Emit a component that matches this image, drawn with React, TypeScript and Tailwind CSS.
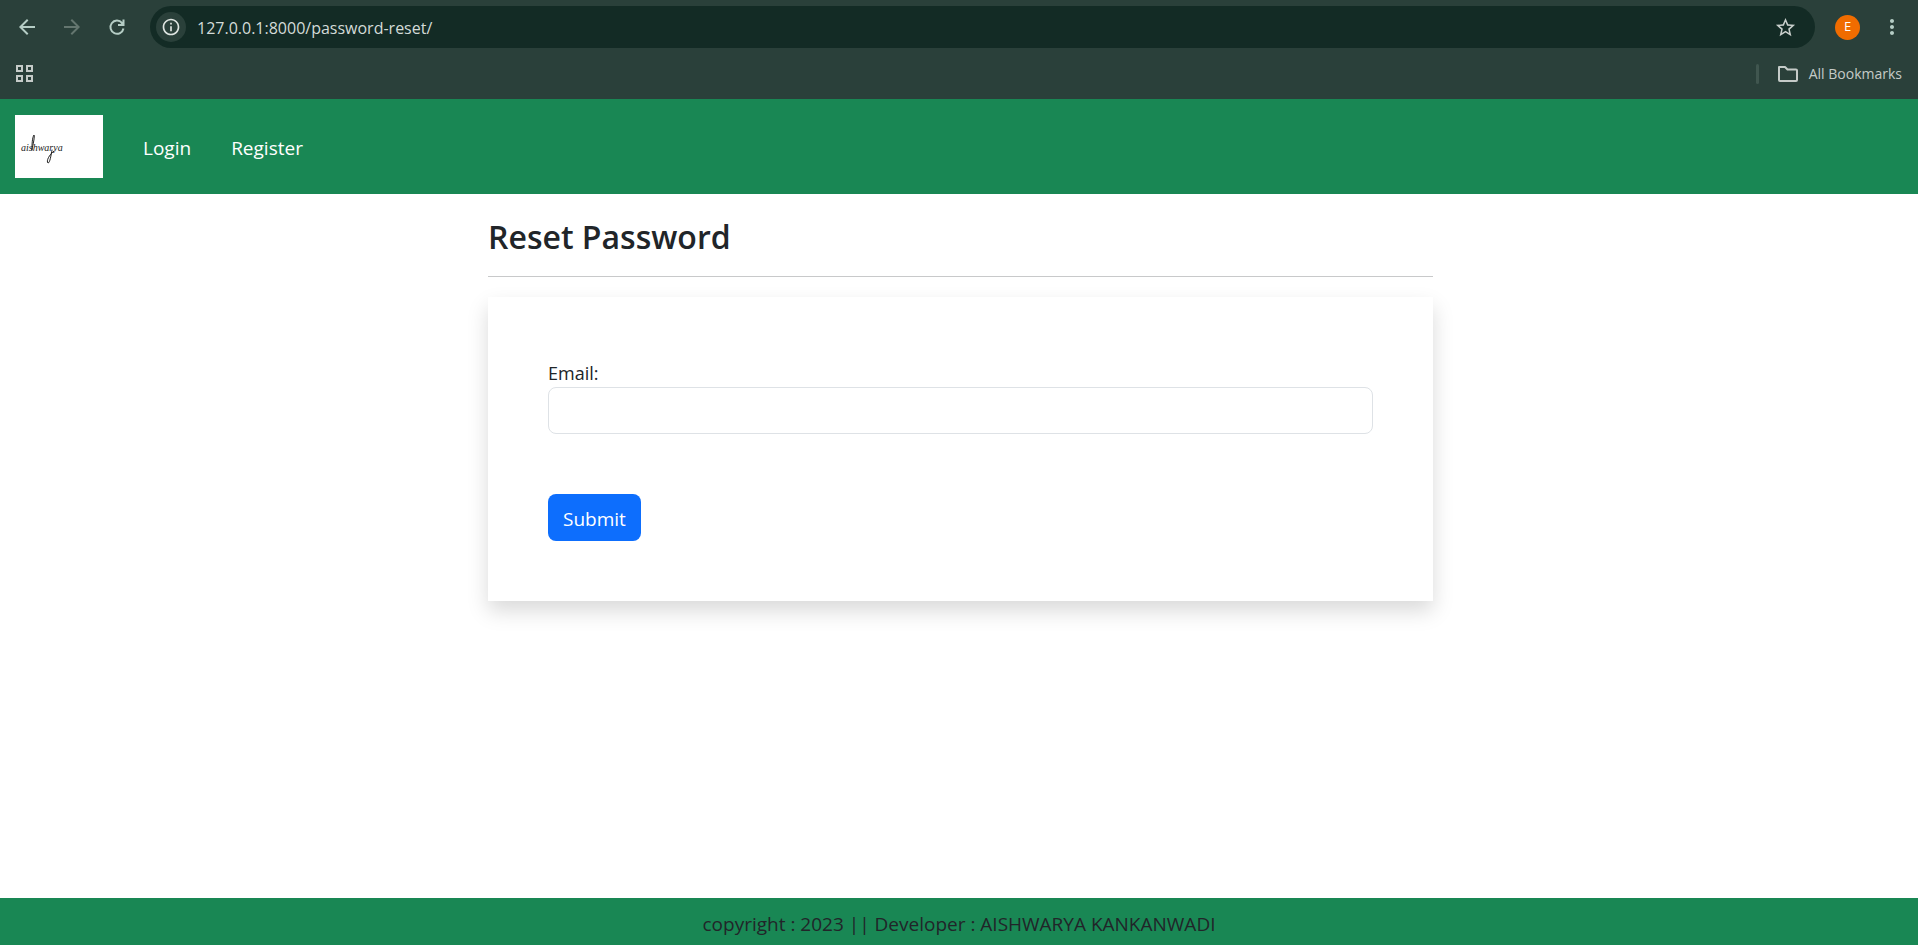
import React from "react";
import { MdArrowBack, MdArrowForward, MdStarOutline, MdMoreVert, MdInfoOutline } from "react-icons/md";

function AppsIcon() {
  return (
    <svg width="20" height="20" viewBox="0 0 20 20" fill="none" stroke="currentColor" strokeWidth="2" aria-hidden="true">
      <path d="M2 2h5v5H2zM12 2h5v5h-5zM2 12h5v5H2zM12 12h5v5h-5z" />
    </svg>
  );
}

function FolderIcon() {
  return (
    <svg width="22" height="18" viewBox="0 0 22 18" fill="none" stroke="currentColor" strokeWidth="2" strokeLinejoin="round" aria-hidden="true">
      <path d="M2 2h6l2.500 2.500H19a1 1 0 0 1 1 1V15a1 1 0 0 1-1 1H3a1 1 0 0 1-1-1z" />
    </svg>
  );
}

function ReloadIcon() {
  return (
    <svg width="24" height="24" viewBox="0 0 24 24" fill="none" stroke="currentColor" strokeWidth="2" aria-hidden="true">
      <path d="M18.500 13.500A6.600 6.600 0 1 1 17 7.800L18.300 9.200" />
      <path d="M18.500 4.500V10H13" />
      <path d="M18.500 6v4h-4z" fill="currentColor" stroke="none" />
    </svg>
  );
}

function BrowserBar() {
  return (
    <header className="bg-[#2a403a] text-[#b5cdc5]">
      <div className="flex h-[54px] items-center py-[6px] pr-[14px] pl-[15px]">
        <div className="flex gap-[21px]">
          <button type="button" aria-label="Back"><MdArrowBack size={24} /></button>
          <button type="button" aria-label="Forward" className="text-[#64766f]"><MdArrowForward size={24} /></button>
          <button type="button" aria-label="Reload"><ReloadIcon /></button>
        </div>
        <div className="ml-[21px] flex h-[42px] flex-1 items-center rounded-full bg-[#132b25] pr-[18px] pl-[6px]">
          <button type="button" aria-label="Site information" className="flex size-[30px] items-center justify-center rounded-full bg-[#2a403a] text-[#dfe5e2]">
            <MdInfoOutline size={20} />
          </button>
          <input
            aria-label="Address"
            defaultValue="127.0.0.1:8000/password-reset/"
            className="ml-[11px] min-w-0 flex-1 bg-transparent pt-[2px] text-[16px] text-[#d3dbd8] outline-none"
          />
          <button type="button" aria-label="Bookmark this page" className="text-[#c9cfcc]"><MdStarOutline size={23} /></button>
        </div>
        <button type="button" aria-label="Profile" className="ml-5 flex size-[25px] items-center justify-center rounded-full bg-[#f06c00] text-[13px] text-white">E</button>
        <button type="button" aria-label="Menu" className="ml-5"><MdMoreVert size={24} /></button>
      </div>
      <div className="flex h-[45px] items-center justify-between pr-4 pb-[6px] pl-[15px] text-[#c5cbc8]">
        <button type="button" aria-label="Apps"><AppsIcon /></button>
        <div className="flex items-center">
          <span className="h-5 w-[3px] rounded-full bg-[#40564f]" />
          <button type="button" className="ml-[18px] flex items-center gap-[10px] text-[14px]">
            <FolderIcon />
            All Bookmarks
          </button>
        </div>
      </div>
    </header>
  );
}

function Logo() {
  return (
    <svg width="88" height="63" viewBox="0 0 88 63" className="bg-white" role="img" aria-label="aishwarya">
      <text x="6" y="36" fontSize="10" fontStyle="italic" fontFamily="Liberation Serif, serif" fill="#222">aishwarya</text>
      <g fill="none" stroke="#222" strokeWidth="1" strokeLinecap="round">
        <path d="M17 35C17 30 17 23 19 20C20 21 18 30 17 34" />
        <path d="M37 35C36 40 35 48 33 48C31 46 34 40 39 36" />
      </g>
    </svg>
  );
}

export default function App() {
  return (
    <div className="flex min-h-screen flex-col bg-white font-['Open_Sans','Noto_Sans',sans-serif] text-[#212529]">
      <BrowserBar />
      <nav className="flex items-center bg-[#198754] px-[15px] py-4 text-[19px] text-white">
        <a href="#home"><Logo /></a>
        <a href="#login" className="ml-10 pt-1">Login</a>
        <a href="#register" className="ml-10 pt-1">Register</a>
      </nav>
      <main className="flex-1 pl-[3px]">
        <div className="mx-auto max-w-[945px]">
          <h1 className="pt-[22px] text-[32px] leading-[42px] font-semibold">Reset Password</h1>
          <hr className="mt-[18px] mb-5 border-[#c8c9ca]" />
          <form className="p-[60px] shadow-[0_10px_20px_rgba(0,0,0,0.15)]" onSubmit={(e) => e.preventDefault()}>
            <label htmlFor="email" className="block pt-[2px] text-[18px] leading-7">Email:</label>
            <input id="email" type="email" className="block h-[47px] w-full rounded-[8px] border border-[#dee2e6] px-[15px] text-[19px] outline-none" />
            <button type="submit" className="mt-[60px] block h-[47px] rounded-[8px] bg-[#0d6efd] px-[15px] pt-1 text-[19px] text-white">Submit</button>
          </form>
        </div>
      </main>
      <footer className="bg-[#198754] pt-[11px] pb-[6px] text-center text-[19px] leading-[30px]">
        copyright : 2023 || Developer : AISHWARYA KANKANWADI
      </footer>
    </div>
  );
}
